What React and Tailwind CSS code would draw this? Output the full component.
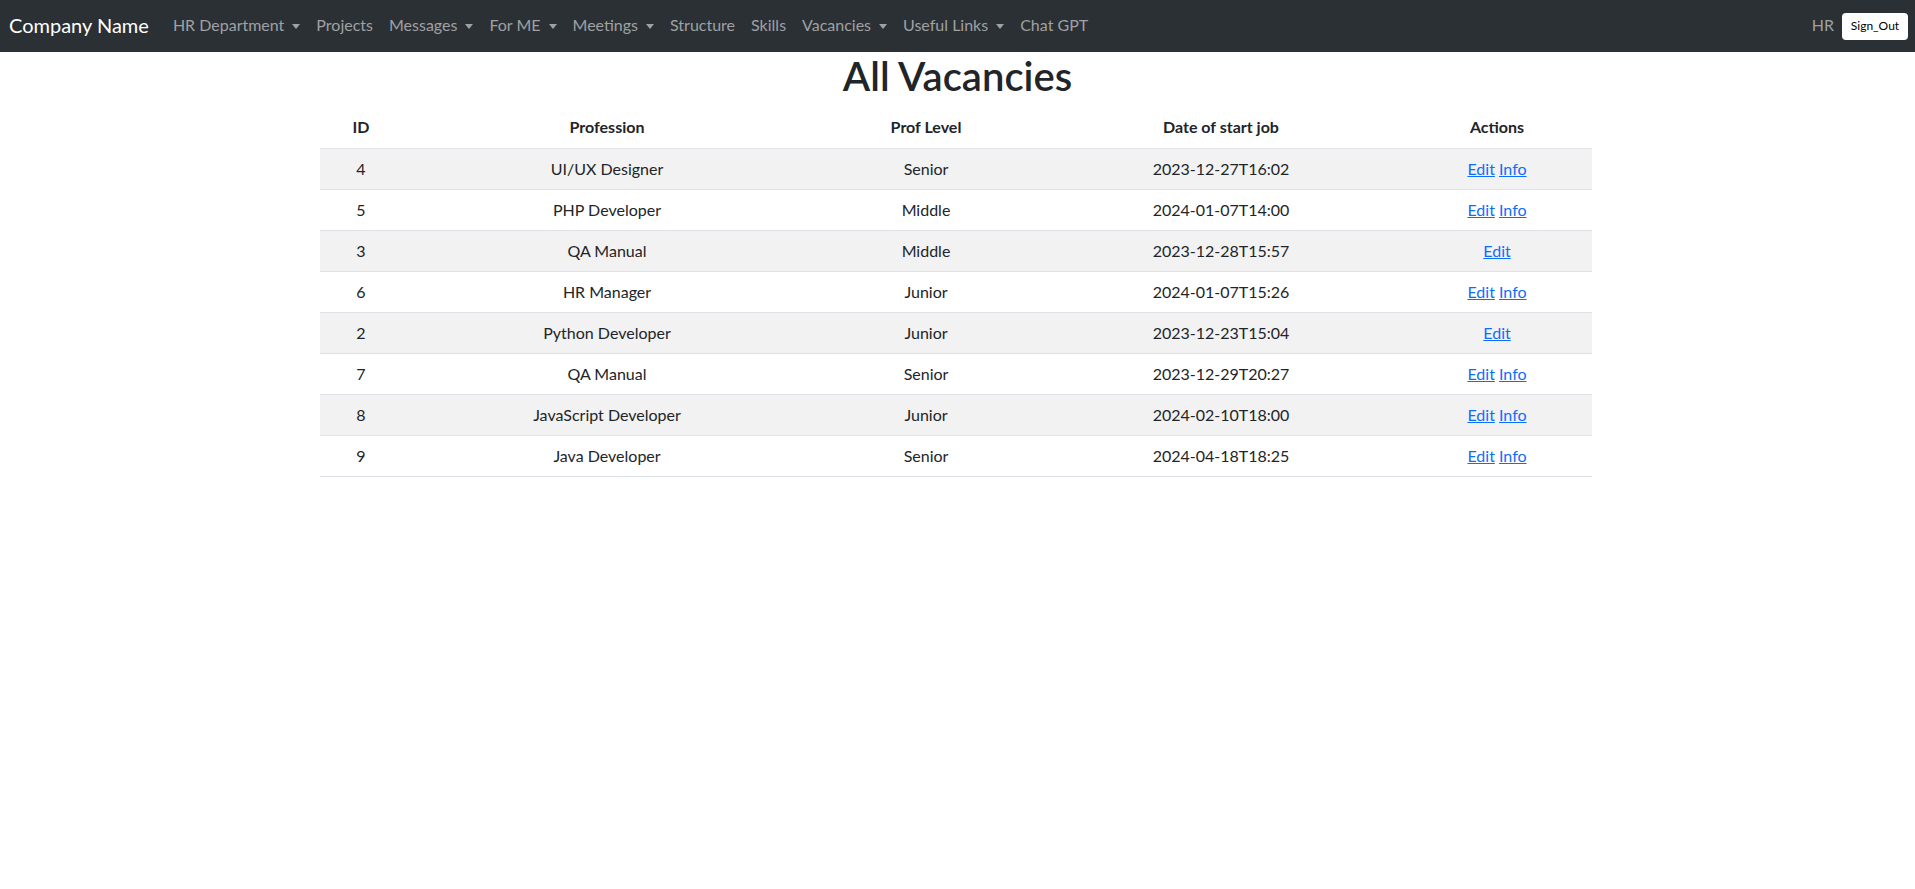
import React from "react";

const rows = [
  ["4", "UI/UX Designer", "Senior", "2023-12-27T16:02", true],
  ["5", "PHP Developer", "Middle", "2024-01-07T14:00", true],
  ["3", "QA Manual", "Middle", "2023-12-28T15:57", false],
  ["6", "HR Manager", "Junior", "2024-01-07T15:26", true],
  ["2", "Python Developer", "Junior", "2023-12-23T15:04", false],
  ["7", "QA Manual", "Senior", "2023-12-29T20:27", true],
  ["8", "JavaScript Developer", "Junior", "2024-02-10T18:00", true],
  ["9", "Java Developer", "Senior", "2024-04-18T18:25", true],
];

const navItems = [
  ["HR Department", true],
  ["Projects", false],
  ["Messages", true],
  ["For ME", true],
  ["Meetings", true],
  ["Structure", false],
  ["Skills", false],
  ["Vacancies", true],
  ["Useful Links", true],
  ["Chat GPT", false],
];

function Caret() {
  return (
    <span className="ml-[8px] mt-[2px] inline-block w-0 h-0 border-l-[4px] border-r-[4px] border-t-[5px] border-l-transparent border-r-transparent border-t-current" />
  );
}

export default function App() {
  return (
    <div className="min-h-[889px] bg-white text-[#212529] font-['Lato','Open_Sans',sans-serif] text-[16px]">
      <nav className="h-[52px] bg-[#2b3035] flex items-center pl-[9px] pr-[7px] pb-[2px]">
        <span className="text-white text-[20px] leading-[30px] mr-[16px]">Company Name</span>
        <div className="flex items-center">
          {navItems.map(([label, dd]) => (
            <span key={label} className="px-[8px] text-[#9fa1a3] leading-[24px] flex items-center">
              {label}
              {dd && <Caret />}
            </span>
          ))}
        </div>
        <div className="ml-auto flex items-center">
          <span className="text-[#9fa1a3] mr-[8px]">HR</span>
          <button className="bg-white text-black text-[12px] leading-[18px] h-[27px] w-[66px] rounded-[4px] mt-[2px]">
            Sign_Out
          </button>
        </div>
      </nav>
      <h1 className="text-center text-[40px] leading-[48px] font-semibold mb-[7px]">All Vacancies</h1>
      <div className="pl-[320px]">
        <table className="w-[1272px] border-collapse text-center">
          <thead>
            <tr className="h-[41px]">
              <th className="w-[82px] font-bold px-[8px]">ID</th>
              <th className="w-[410px] font-bold px-[8px]">Profession</th>
              <th className="w-[228px] font-bold px-[8px]">Prof Level</th>
              <th className="w-[362px] font-bold px-[8px]">Date of start job</th>
              <th className="w-[190px] font-bold px-[8px]">Actions</th>
            </tr>
          </thead>
          <tbody>
            {rows.map(([id, prof, lvl, date, info], i) => (
              <tr
                key={i}
                className={`h-[41px] border-t border-b border-[#dee2e6] ${i % 2 === 0 ? "bg-[#f2f2f2]" : "bg-white"}`}
              >
                <td className="px-[8px]">{id}</td>
                <td className="px-[8px]">{prof}</td>
                <td className="px-[8px]">{lvl}</td>
                <td className="px-[8px]">{date}</td>
                <td className="px-[8px]">
                  <a className="text-[#0d6efd] underline">Edit</a>
                  {info && (
                    <>
                      {" "}
                      <a className="text-[#0d6efd] underline">Info</a>
                    </>
                  )}
                </td>
              </tr>
            ))}
          </tbody>
        </table>
      </div>
    </div>
  );
}
